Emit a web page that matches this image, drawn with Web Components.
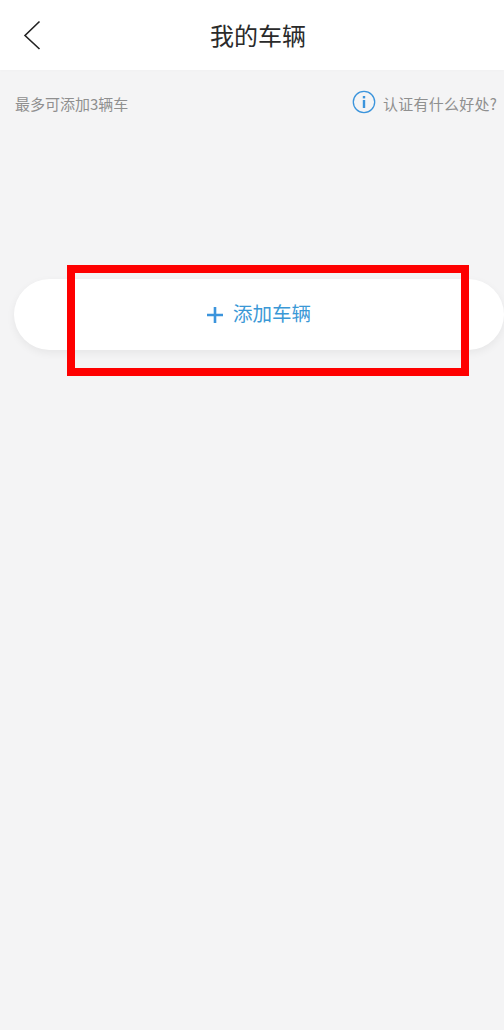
<!DOCTYPE html>
<html lang="zh">
<head>
<meta charset="utf-8">
<title>我的车辆</title>
<style>
  html, body { margin: 0; height: 100%; }
  body { background: #f4f4f5; font-family: "Noto Sans CJK SC", "Liberation Sans", sans-serif; overflow: hidden; }
</style>
</head>
<body>
<vehicle-page>
  <nav-bar>我的车辆</nav-bar>
  <info-row limit="最多可添加3辆车">认证有什么好处?</info-row>
  <add-button>添加车辆</add-button>
</vehicle-page>

<script>
class VehiclePage extends HTMLElement {
  constructor() {
    super();
    this.attachShadow({mode: 'open'});
    this.shadowRoot.innerHTML = `
      <style>
        :host { display: flex; flex-direction: column; width: 504px; height: 1030px; background: #f4f4f5; }
      </style>
      <slot></slot>`;
  }
}

class NavBar extends HTMLElement {
  constructor() {
    super();
    this.attachShadow({mode: 'open'});
    this.shadowRoot.innerHTML = `
      <style>
        :host { display: flex; align-items: center; height: 70px; background: #fff; padding-left: 22px; box-sizing: border-box; box-shadow: 0 1px 2px rgba(0,0,0,.015); }
        svg { display: block; flex: none; margin-top: -1px; }
        .title { flex: 1; text-align: center; font-size: 24px; color: #2a2a2a; padding-right: 30px; margin-top: -2px; }
      </style>
      <svg width="20" height="30" viewBox="0 0 20 30" fill="none" stroke="#222" stroke-width="1.6">
        <path d="M17.5 1.5 3 15.5 17.5 29"/>
      </svg>
      <div class="title"><slot></slot></div>`;
  }
}

class InfoRow extends HTMLElement {
  constructor() {
    super();
    this.attachShadow({mode: 'open'});
    this.shadowRoot.innerHTML = `
      <style>
        :host { display: flex; align-items: center; justify-content: space-between; height: 70px; box-sizing: border-box; padding: 0 7px 3px 15px; font-size: 15px; color: #8f8f8f; }
        .help { display: flex; align-items: center; gap: 7px; letter-spacing: .25px; }
        svg { display: block; margin-top: -3px; }
      </style>
      <span id="limit"></span>
      <span class="help">
        <svg width="24" height="24" viewBox="0 0 24 24" fill="none">
          <circle cx="12" cy="12" r="10.7" stroke="#3b94dc" stroke-width="1.3"/>
          <rect x="10.8" y="10" width="2.4" height="8" fill="#3b94dc"/>
          <rect x="10.8" y="6" width="2.4" height="2.4" fill="#3b94dc"/>
        </svg>
        <span><slot></slot></span>
      </span>`;
  }
  connectedCallback() {
    this.shadowRoot.querySelector('#limit').textContent = this.getAttribute('limit');
  }
}

class AddButton extends HTMLElement {
  constructor() {
    super();
    this.attachShadow({mode: 'open'});
    this.shadowRoot.innerHTML = `
      <style>
        :host { display: block; position: relative; margin: 139px 0 0 14px; }
        .btn { display: flex; align-items: center; justify-content: center; gap: 10px; height: 71px; background: #fff; border-radius: 36px; box-shadow: 0 3px 8px rgba(0,0,0,.06); font-size: 19.5px; color: #3a98d6; }
        svg { display: block; }
        .label { padding-bottom: 4px; }
        /* recuadro rojo de la captura, va encima del botón */
        .mark { position: absolute; left: 53px; top: -14px; width: 402px; height: 111px; box-sizing: border-box; border: 8px solid #fe0000; pointer-events: none; }
      </style>
      <div class="btn">
        <svg width="16" height="16" viewBox="0 0 16 16"><path d="M0 8h16M8 0v16" stroke="#3b94dc" stroke-width="2.6"/></svg>
        <span class="label"><slot></slot></span>
      </div>
      <div class="mark"></div>`;
  }
}

window.customElements.define('vehicle-page', VehiclePage);
window.customElements.define('nav-bar', NavBar);
window.customElements.define('info-row', InfoRow);
window.customElements.define('add-button', AddButton);
</script>
</body>
</html>
